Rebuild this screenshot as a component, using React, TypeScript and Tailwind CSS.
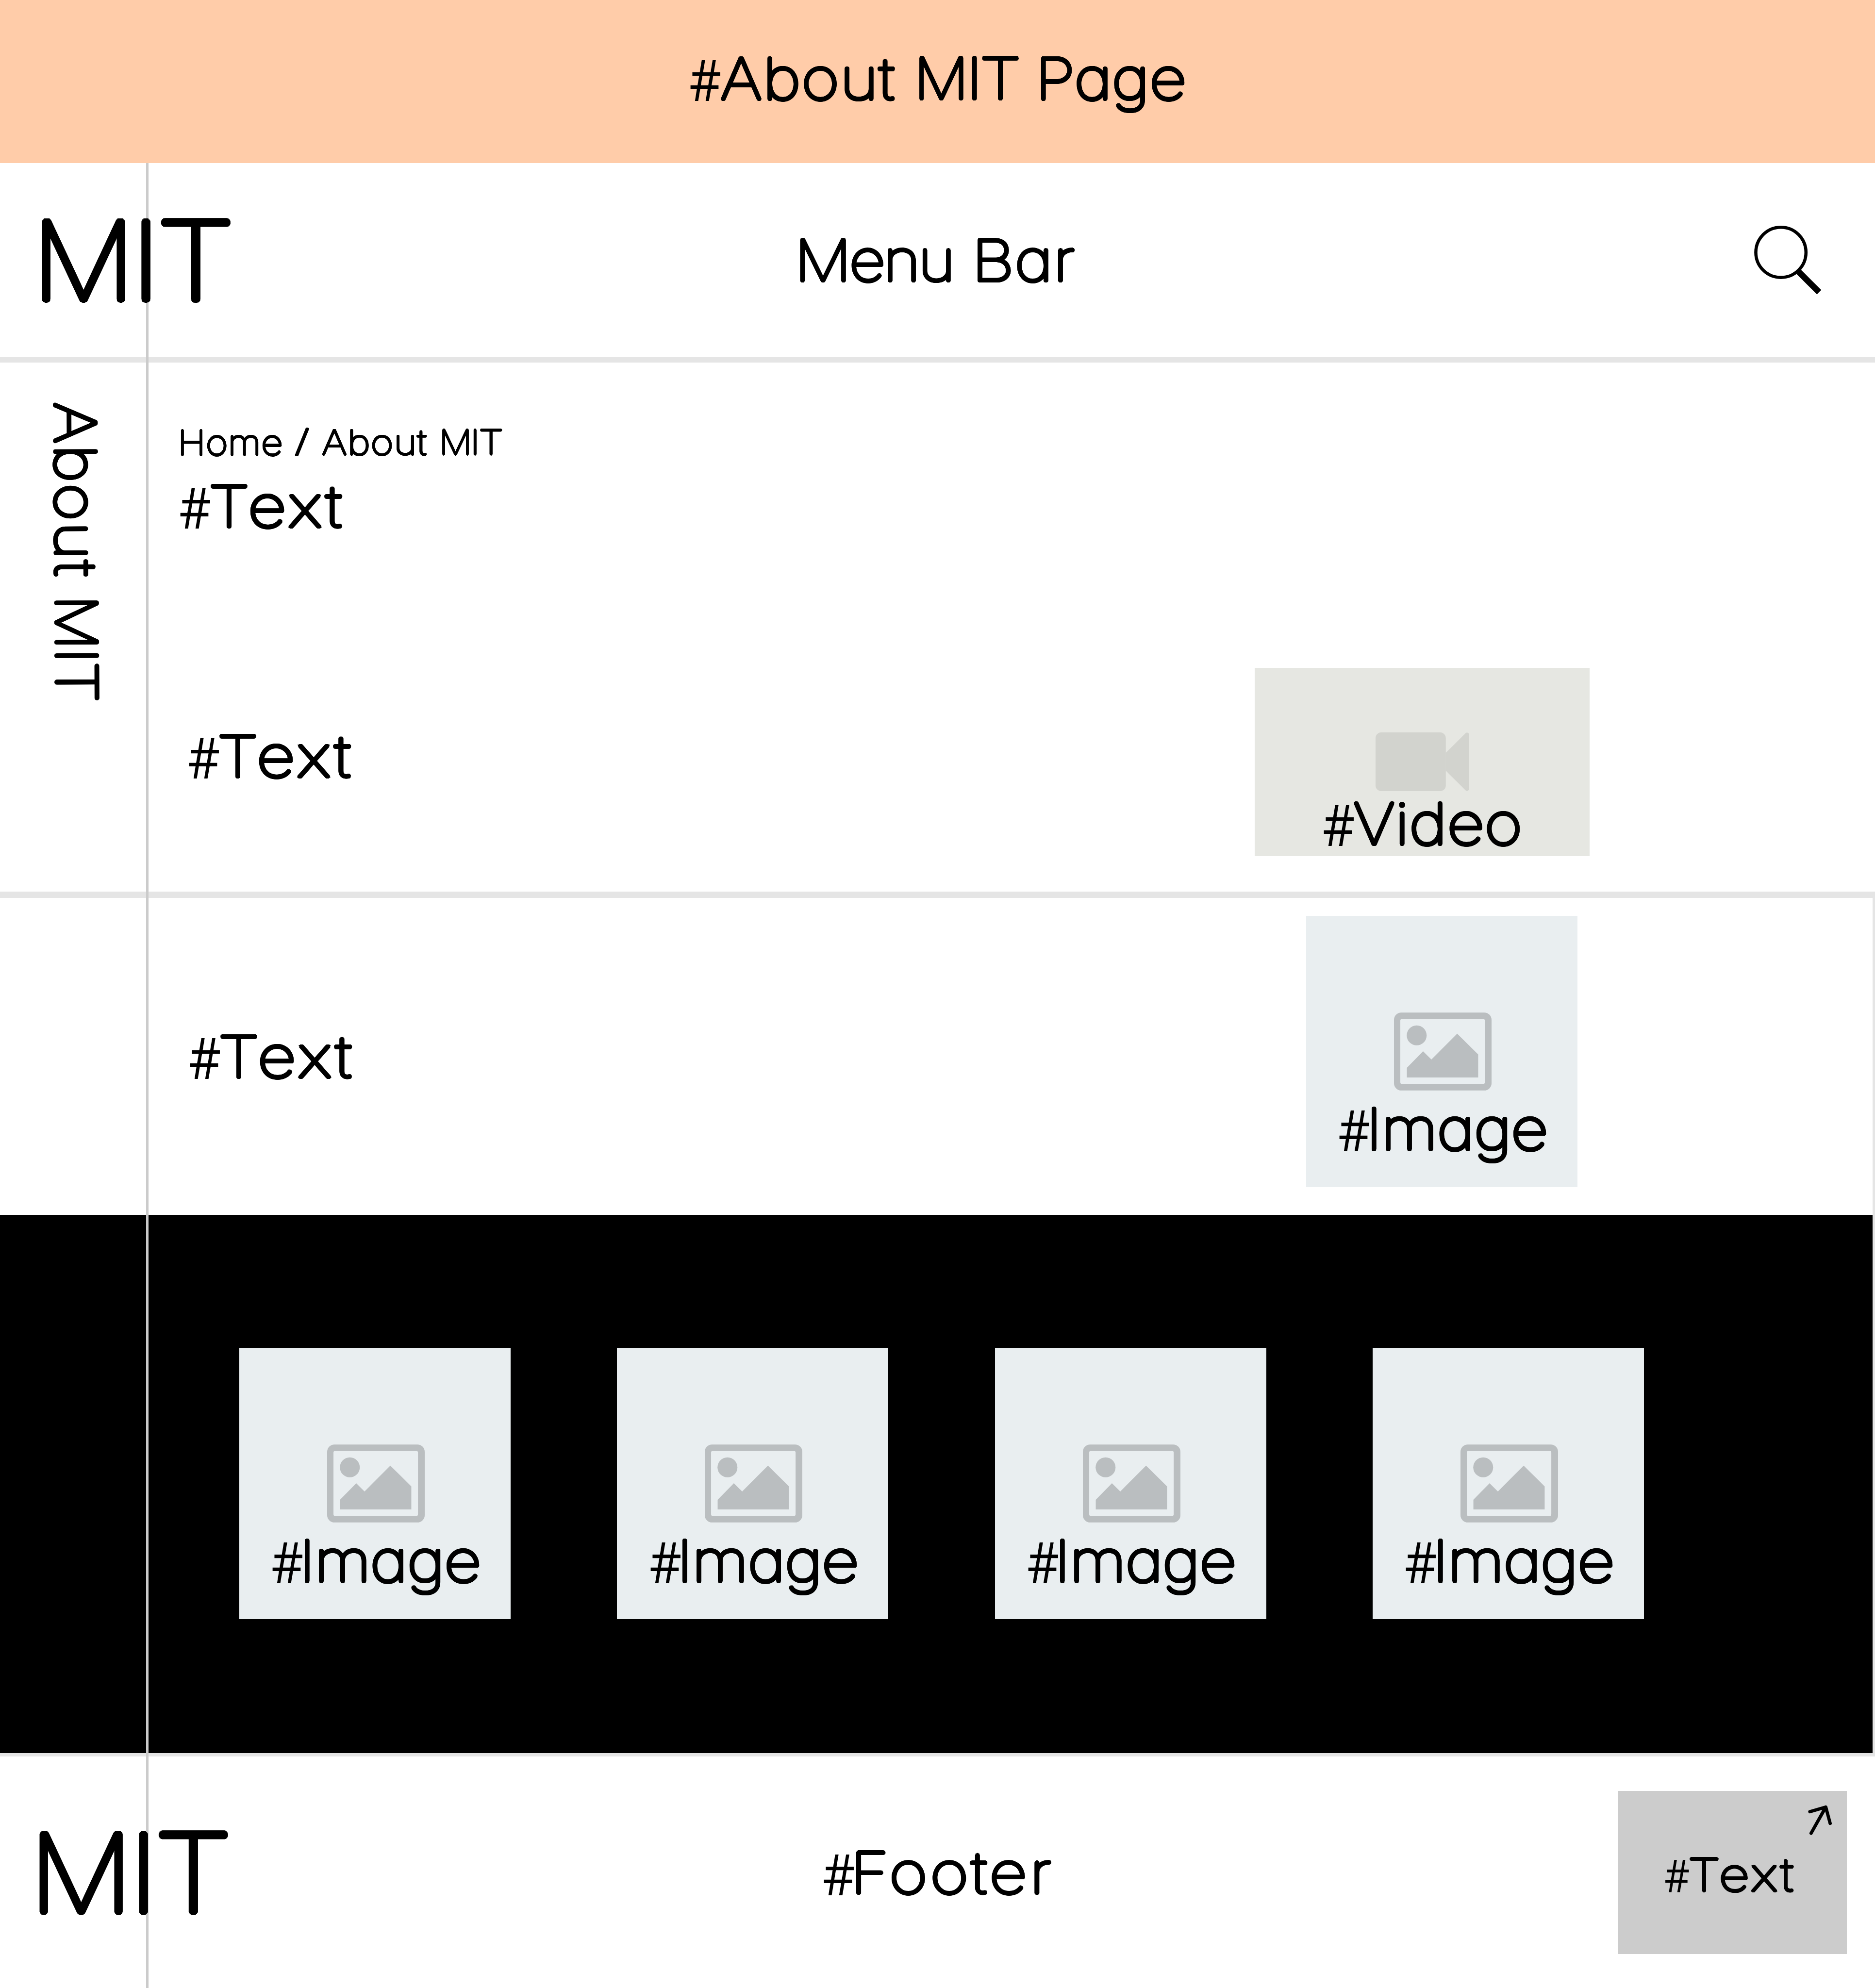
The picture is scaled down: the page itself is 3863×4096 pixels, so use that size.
import type { ReactNode } from 'react';

/* Thin skeleton letters thickened with an outline and a ring of shadows, which rounds the stroke ends. */
const ROUND =
  "font-[Inter,sans-serif] font-thin [font-feature-settings:'cv11'] [-webkit-text-stroke:0.03em_black] [text-shadow:0.025em_0_black,0.0231em_0.0115em_black,0.0177em_0.0212em_black,0.0096em_0.0277em_black,0_0.03em_black,-0.0096em_0.0277em_black,-0.0177em_0.0212em_black,-0.0231em_0.0115em_black,-0.025em_0_black,-0.0231em_-0.0115em_black,-0.0177em_-0.0212em_black,-0.0096em_-0.0277em_black,0_-0.03em_black,0.0096em_-0.0277em_black,0.0177em_-0.0212em_black,0.0231em_-0.0115em_black]";

function Label({ size = 'text-[117px]', className = '', children }: { size?: string; className?: string; children: ReactNode }) {
  return <div className={`flex items-baseline whitespace-nowrap leading-none text-black ${size} ${className}`}>{children}</div>;
}

function Word({ box, fit, children }: { box: string; fit: string; children: string }) {
  return (
    <span className={`block shrink-0 ${box}`}>
      <span className={`block w-max origin-left ${ROUND} ${fit}`}>{children}</span>
    </span>
  );
}

function Hash() {
  return (
    <span className="block w-[0.533em] shrink-0 leading-[0]">
      <span className="ml-[-0.019em] block w-max origin-left translate-y-[0.042em] scale-x-[0.882] font-['Open_Sans',sans-serif] font-normal">#</span>
    </span>
  );
}

const About = () => (
  <Word box="w-[3.115em]" fit="ml-[-0.001em] translate-y-[0.012em] scale-x-[1.15] tracking-[0.011em]">About</Word>
);

/* Each capital has its own width, so the M stays narrow and the T wide. */
const Mit = ({ box = 'w-[1.773em] ml-[0.376em]' }: { box?: string }) => (
  <span className={`block shrink-0 ${box}`}>
    <span className={`ml-[-0.049em] block w-max translate-y-[0.006em] ${ROUND}`}>
      <span className="inline-block scale-x-[1.075]">M</span>
      <span className="ml-[0.005em] inline-block scale-x-[1.15]">I</span>
      <span className="ml-[0.031em] inline-block scale-x-[1.19]">T</span>
    </span>
  </span>
);

const HashText = ({ size, className }: { size?: string; className?: string }) => (
  <Label size={size} className={className}>
    <Hash />
    <Word box="w-[2.339em]" fit="ml-[-0.04em] translate-y-[0.012em] scale-x-[1.19] tracking-[0.047em]">Text</Word>
  </Label>
);

function Logo() {
  return (
    <Label size="text-[221.8px]" className="relative z-10">
      <Mit box="w-[1.76em]" />
    </Label>
  );
}

function SearchIcon() {
  return (
    <svg className="h-[142px] w-[139px]" viewBox="0 0 165 169" fill="none" stroke="black">
      <circle cx="65.4" cy="65.4" r="61.5" strokeWidth="7.8" />
      <path d="M109 113 159 163" strokeWidth="15" />
    </svg>
  );
}

function ImageCard() {
  return (
    <div className="flex h-[559px] w-[559px] shrink-0 flex-col items-center bg-[#e9eef0] pl-1 pt-[199px]">
      <svg className="h-[161px] w-[201px] shrink-0" viewBox="0 0 239 191" fill="#babec0">
        <path
          fillRule="evenodd"
          d="M18 0H221a18 18 0 0 1 18 18V173a18 18 0 0 1-18 18H18a18 18 0 0 1-18-18V18A18 18 0 0 1 18 0ZM19.500 15.800a4 4 0 0 0-4 4V171a4 4 0 0 0 4 4H218.500a4 4 0 0 0 4-4V19.800a4 4 0 0 0-4-4Z"
        />
        <circle cx="55.600" cy="56" r="24.400" />
        <path d="M31.600 135.300 71.300 95 91.600 115 154.800 51.700 206.200 102.500V159.200H31.600Z" />
      </svg>
      <Label className="mt-[19px]">
        <Hash />
        <Word box="ml-[3px] w-[3.082em]" fit="ml-[-0.096em] translate-y-[0.012em] scale-x-[1.15] tracking-[-0.014em]">Image</Word>
      </Label>
    </div>
  );
}

function VideoCard() {
  return (
    <div className="flex h-[388px] w-[690px] shrink-0 flex-col items-center bg-[#e6e7e2] pt-[133px]">
      <svg className="h-[121px] w-[193px] shrink-0" viewBox="0 0 230 144" fill="#d2d3ce">
        <rect width="172.500" height="144" rx="14" />
        <path d="M172 50.500 221.500 1.500Q226-2 230 4V140Q226 146 221.500 142.500L172 93.500Z" />
      </svg>
      <Label className="mt-[7px]">
        <Hash />
        <Word box="ml-[-1px] w-[2.942em]" fit="ml-[-0.001em] translate-y-[0.012em] scale-x-[1.15]">Video</Word>
      </Label>
    </div>
  );
}

export default function App() {
  return (
    <div className="relative flex h-[4096px] w-[3863px] flex-col overflow-hidden bg-white">
      <header className="flex h-[336px] shrink-0 items-center justify-center bg-[#ffcca9] pb-[15px]">
        <Label>
          <Hash />
          <About />
          <Mit />
          <Word box="ml-[0.375em] w-[2.534em]" fit="ml-[-0.096em] translate-y-[0.012em] scale-x-[1.15] tracking-[-0.006em]">Page</Word>
        </Label>
      </header>

      <nav className="grid h-[411px] shrink-0 grid-cols-[1fr_auto_1fr] items-center border-b-[12px] border-[#e5e5e5] pl-[84px] pr-[110px]">
        <Logo />
        <Label className="ml-[25px]">
          <Word box="w-[2.698em]" fit="ml-[-0.094em] translate-y-[0.008em] scale-x-[1.12] tracking-[-0.036em]">Menu</Word>
          <Word box="ml-[0.421em] w-[1.716em]" fit="ml-[-0.098em] translate-y-[0.008em] scale-x-[1.17] tracking-[0.004em]">Bar</Word>
        </Label>
        <div className="justify-self-end">
          <SearchIcon />
        </div>
      </nav>

      <section className="flex h-[1103px] shrink-0 border-b-[13px] border-[#e5e5e5]">
        <aside className="w-[301px] shrink-0 pl-[215px] pt-[81px]">
          <div className="h-0 w-0 origin-top-left rotate-[89.75deg]">
            <Label>
              <About />
              <Mit box="ml-[0.374em] w-[1.773em]" />
            </Label>
          </div>
        </aside>
        <div className="flex flex-col pl-[70px] pt-[129px]">
          <Label size="text-[70.4px]" className="pl-[2px]">
            <Word box="w-[2.968em]" fit="ml-[-0.094em] translate-y-[0.02em] scale-x-[1.12]">Home</Word>
            <Word box="ml-[25px] w-[33px]" fit="-translate-y-[5px] scale-x-[1.5] text-[63px]">/</Word>
            <span className="w-[23px]" />
            <About />
            <Mit box="ml-[0.395em] w-[1.769em]" />
          </Label>
          <HashText className="mt-[37px]" />
          <div className="mt-[276px] flex pl-[18px]">
            <HashText className="w-[335px] pt-[122px]" />
            <div className="ml-[1861px]">
              <VideoCard />
            </div>
          </div>
        </div>
      </section>

      <div className="flex h-[1769px] shrink-0 flex-col border-b-[7px] border-r-[5px] border-[#e5e5e5]">
        <section className="flex h-[653px] shrink-0 pl-[391px] pt-[37px]">
          <HashText className="w-[335px] self-start pt-[230px]" />
          <div className="ml-[1965px]">
            <ImageCard />
          </div>
        </section>
        <section className="flex flex-1 gap-[219.300px] bg-black pl-[493px] pt-[274px]">
          <ImageCard />
          <ImageCard />
          <ImageCard />
          <ImageCard />
        </section>
      </div>

      <footer className="grid flex-1 grid-cols-[1fr_auto_1fr] items-center pl-[79px] pr-[58px]">
        <Logo />
        <Label className="-ml-[21px]">
          <Hash />
          <Word box="ml-[4px] w-[3.442em]" fit="ml-[-0.098em] translate-y-[0.008em] scale-x-[1.17] tracking-[0.038em]">Footer</Word>
        </Label>
        <div className="relative flex h-[336px] w-[472px] items-center justify-center justify-self-end bg-[#cccccc] pr-[10px] pt-2">
          <HashText size="text-[92.500px]" />
          <svg className="absolute right-[31px] top-[29px] h-[62px] w-[49px]" viewBox="0 0 58 73.400" fill="none" stroke="black" strokeWidth="8" strokeLinecap="round" strokeLinejoin="round">
            <path d="M4.500 16.300 43.300 5 54 44.800M43.300 5 7.500 68.800" />
          </svg>
        </div>
      </footer>

      <div className="absolute bottom-0 left-[301px] top-[336px] w-[5px] bg-[#cbcbcb]" />
    </div>
  );
}
